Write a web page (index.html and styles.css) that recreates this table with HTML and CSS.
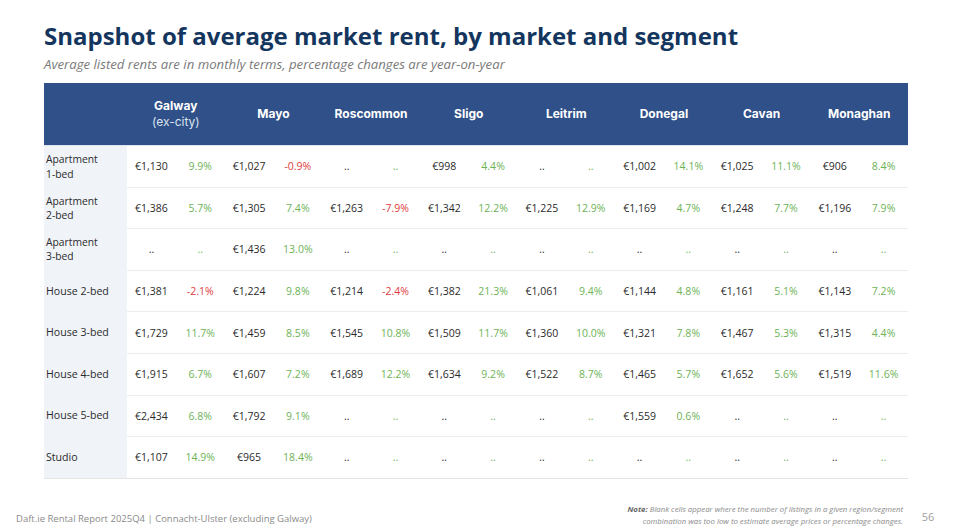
FILE: index.html
```html
<!DOCTYPE html>
<html lang="en">
<head>
<meta charset="utf-8">
<title>Snapshot of average market rent</title>
<link rel="stylesheet" href="styles.css">
</head>
<body>
<div class="page">
  <h1 class="title">Snapshot of average market rent, by market and segment</h1>
  <p class="subtitle">Average listed rents are in monthly terms, percentage changes are year-on-year</p>
  <table class="rent">
    <colgroup>
      <col class="c-label">
      <col span="16">
    </colgroup>
    <thead>
      <tr>
        <th class="h-label"></th>
        <th colspan="2"><span class="region">Galway</span><span class="region-sub">(ex-city)</span></th>
        <th colspan="2"><span class="region">Mayo</span></th>
        <th colspan="2"><span class="region">Roscommon</span></th>
        <th colspan="2"><span class="region">Sligo</span></th>
        <th colspan="2"><span class="region">Leitrim</span></th>
        <th colspan="2"><span class="region">Donegal</span></th>
        <th colspan="2"><span class="region">Cavan</span></th>
        <th colspan="2"><span class="region">Monaghan</span></th>
      </tr>
    </thead>
    <tbody>
      <tr>
        <th class="lbl"><span class="ln">Apartment</span><span class="ln">1-bed</span></th>
        <td>€1,130</td><td class="up">9.9%</td>
        <td>€1,027</td><td class="down">-0.9%</td>
        <td>..</td><td class="up">..</td>
        <td>€998</td><td class="up">4.4%</td>
        <td>..</td><td class="up">..</td>
        <td>€1,002</td><td class="up">14.1%</td>
        <td>€1,025</td><td class="up">11.1%</td>
        <td>€906</td><td class="up">8.4%</td>
      </tr>
      <tr>
        <th class="lbl"><span class="ln">Apartment</span><span class="ln">2-bed</span></th>
        <td>€1,386</td><td class="up">5.7%</td>
        <td>€1,305</td><td class="up">7.4%</td>
        <td>€1,263</td><td class="down">-7.9%</td>
        <td>€1,342</td><td class="up">12.2%</td>
        <td>€1,225</td><td class="up">12.9%</td>
        <td>€1,169</td><td class="up">4.7%</td>
        <td>€1,248</td><td class="up">7.7%</td>
        <td>€1,196</td><td class="up">7.9%</td>
      </tr>
      <tr>
        <th class="lbl"><span class="ln">Apartment</span><span class="ln">3-bed</span></th>
        <td>..</td><td class="up">..</td>
        <td>€1,436</td><td class="up">13.0%</td>
        <td>..</td><td class="up">..</td>
        <td>..</td><td class="up">..</td>
        <td>..</td><td class="up">..</td>
        <td>..</td><td class="up">..</td>
        <td>..</td><td class="up">..</td>
        <td>..</td><td class="up">..</td>
      </tr>
      <tr>
        <th class="lbl">House 2-bed</th>
        <td>€1,381</td><td class="down">-2.1%</td>
        <td>€1,224</td><td class="up">9.8%</td>
        <td>€1,214</td><td class="down">-2.4%</td>
        <td>€1,382</td><td class="up">21.3%</td>
        <td>€1,061</td><td class="up">9.4%</td>
        <td>€1,144</td><td class="up">4.8%</td>
        <td>€1,161</td><td class="up">5.1%</td>
        <td>€1,143</td><td class="up">7.2%</td>
      </tr>
      <tr>
        <th class="lbl">House 3-bed</th>
        <td>€1,729</td><td class="up">11.7%</td>
        <td>€1,459</td><td class="up">8.5%</td>
        <td>€1,545</td><td class="up">10.8%</td>
        <td>€1,509</td><td class="up">11.7%</td>
        <td>€1,360</td><td class="up">10.0%</td>
        <td>€1,321</td><td class="up">7.8%</td>
        <td>€1,467</td><td class="up">5.3%</td>
        <td>€1,315</td><td class="up">4.4%</td>
      </tr>
      <tr>
        <th class="lbl">House 4-bed</th>
        <td>€1,915</td><td class="up">6.7%</td>
        <td>€1,607</td><td class="up">7.2%</td>
        <td>€1,689</td><td class="up">12.2%</td>
        <td>€1,634</td><td class="up">9.2%</td>
        <td>€1,522</td><td class="up">8.7%</td>
        <td>€1,465</td><td class="up">5.7%</td>
        <td>€1,652</td><td class="up">5.6%</td>
        <td>€1,519</td><td class="up">11.6%</td>
      </tr>
      <tr>
        <th class="lbl">House 5-bed</th>
        <td>€2,434</td><td class="up">6.8%</td>
        <td>€1,792</td><td class="up">9.1%</td>
        <td>..</td><td class="up">..</td>
        <td>..</td><td class="up">..</td>
        <td>..</td><td class="up">..</td>
        <td>€1,559</td><td class="up">0.6%</td>
        <td>..</td><td class="up">..</td>
        <td>..</td><td class="up">..</td>
      </tr>
      <tr>
        <th class="lbl">Studio</th>
        <td>€1,107</td><td class="up">14.9%</td>
        <td>€965</td><td class="up">18.4%</td>
        <td>..</td><td class="up">..</td>
        <td>..</td><td class="up">..</td>
        <td>..</td><td class="up">..</td>
        <td>..</td><td class="up">..</td>
        <td>..</td><td class="up">..</td>
        <td>..</td><td class="up">..</td>
      </tr>
    </tbody>
  </table>
  <footer class="footer">
    <div class="source">Daft.ie Rental Report 2025Q4 | Connacht-Ulster (excluding Galway)</div>
    <div class="note"><span class="ln"><b>Note:</b> Blank cells appear where the number of listings in a given region/segment</span><span class="ln">combination was too low to estimate average prices or percentage changes.</span></div>
    <div class="pageno">56</div>
  </footer>
</div>
</body>
</html>
```

FILE: styles.css
```css
html, body {
  margin: 0;
  padding: 0;
  background: #ffffff;
}

.page {
  width: 953px;
  height: 528px;
  box-sizing: border-box;
  padding: 0 0 0 44px;
  display: flex;
  flex-direction: column;
  font-family: "Open Sans", "Liberation Sans", sans-serif;
  overflow: hidden;
}

.title {
  margin: 20px 0 0 0;
  font-size: 24px;
  line-height: 32px;
  font-weight: 700;
  color: #14365e;
  letter-spacing: 0;
}

.subtitle {
  margin: 3px 0 0 0;
  font-size: 13.2px;
  line-height: 18px;
  font-style: italic;
  color: #7a7a7a;
}

.rent {
  margin-top: 10px;
  width: 864px;
  table-layout: fixed;
  border-collapse: collapse;
  border-spacing: 0;
}

.c-label {
  width: 83px;
}

.rent thead th {
  background: #2f5088;
  color: #ffffff;
  height: 62px;
  padding: 0;
  text-align: center;
  vertical-align: middle;
  font-family: "Inter", "DejaVu Sans", sans-serif;
  border-bottom: 1px solid #dfe5ee;
}

.region {
  display: block;
  font-size: 12px;
  line-height: 16px;
  font-weight: 700;
}

.region-sub {
  display: block;
  font-size: 12px;
  line-height: 16px;
  font-weight: 400;
  color: #dbe3f0;
}

.rent tbody tr {
  height: 41.6px;
}

.rent tbody td {
  padding: 0;
  text-align: center;
  vertical-align: middle;
  font-size: 10.5px;
  color: #2b2b2b;
  border-bottom: 1px solid #ececec;
  white-space: nowrap;
}

.rent tbody th.lbl {
  background: #f0f3f8;
  text-align: left;
  font-weight: 400;
  font-size: 10.6px;
  line-height: 13px;
  color: #2b2b2b;
  padding: 0 0 0 2px;
  vertical-align: middle;
}

.ln {
  display: block;
}

.lbl .ln {
  font-size: 10.3px;
  line-height: 14.1px;
}

.rent tbody tr:last-child th.lbl,
.rent tbody tr:last-child td {
  border-bottom: 1px solid #e4e4e4;
}

.rent tbody td.up {
  color: #6db356;
}

.rent tbody td.down {
  color: #e03c3c;
}

.footer {
  margin-top: auto;
  margin-left: -44px;
  display: flex;
  align-items: flex-end;
  padding: 0 0 1px 16px;
}

.source {
  flex: 1;
  font-size: 9.5px;
  line-height: 12px;
  margin-bottom: 2px;
  color: #8a8a8a;
}

.note {
  text-align: right;
  font-size: 7.8px;
  line-height: 12px;
  font-style: italic;
  color: #8a8a8a;
}

.note b {
  font-weight: 700;
  color: #666666;
}

.pageno {
  width: 50px;
  text-align: center;
  font-size: 11px;
  line-height: 14px;
  margin-bottom: 3px;
  color: #a0a0a0;
}
```
